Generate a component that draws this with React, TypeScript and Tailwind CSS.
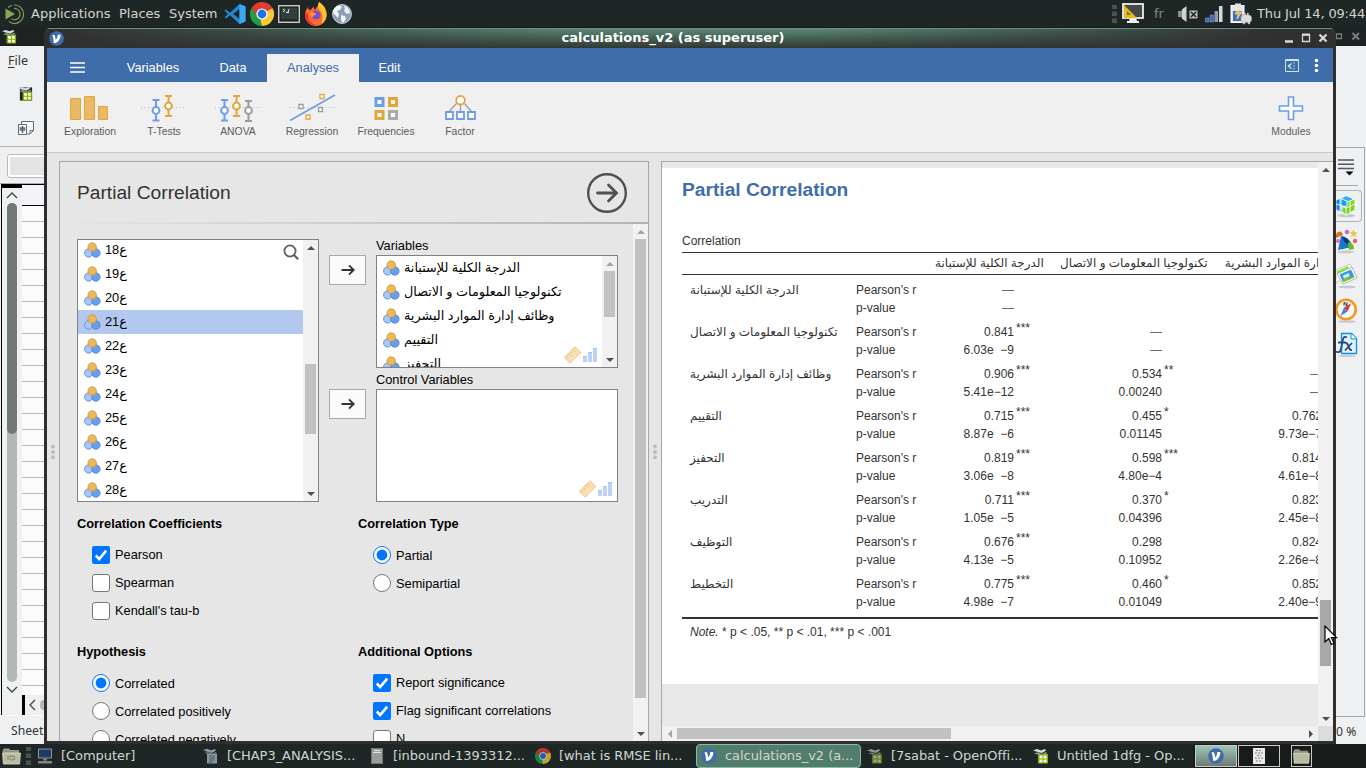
import React from "react";

const UI = "font-['Liberation_Sans','DejaVu_Sans',sans-serif]";
const DJ = "font-['DejaVu_Sans',sans-serif]";

/* ---------- small drawings ---------- */

const NominalIcon = () => (
  <svg width="17" height="17" viewBox="0 0 17 17" className="shrink-0">
    <circle cx="4.7" cy="11" r="4.2" fill="#a9c6f3" stroke="#5d92e6" strokeWidth="0.9" />
    <circle cx="11.9" cy="11" r="4.2" fill="#6b9de8" stroke="#4a86e0" strokeWidth="0.9" />
    <circle cx="8.2" cy="5" r="4.2" fill="#ebb95c" stroke="#cf9a35" strokeWidth="0.9" />
  </svg>
);

const JamoviIcon = ({ size = 16 }: { size?: number }) => (
  <svg width={size} height={size} viewBox="0 0 16 16" className="shrink-0">
    <circle cx="8" cy="8" r="7.8" fill="#3e6da9" />
    <path d="M3.400 4.200h2.400c.9 1.600 1.200 3.400 1.300 5.200C8.700 8 9.200 6 9.300 4h3.100c0 3.600-2 7.600-5.400 8.700H5C4.900 9.700 4.700 6.600 3.400 4.200Z" fill="#fff" />
  </svg>
);

const CalcIcon = ({ size = 16, dim = false }: { size?: number; dim?: boolean }) => (
  <svg width={size} height={size} viewBox="0 0 16 16" className={dim ? "shrink-0 opacity-60" : "shrink-0"}>
    <rect x="2" y="1.500" width="13" height="14" fill="#20282c" />
    <path d="M0 2.500 4 1l4 1.500L12 1l1 1.500L9 5 4 3.700Z" fill="#d3dde4" />
    <path d="M1 5.500 5 4.300 9 6 13 4l1 1.300L9 8 5 6.500Z" fill="#8ba0ae" />
    <rect x="5" y="6" width="10" height="9.500" fill="#8aa80a" />
    <path d="M6.500 7.500h3v3h-3zM10.600 7.500h3v3h-3zM6.500 11.500h3v3h-3zM10.600 11.500h3v3h-3z" fill="#f6fbdc" />
  </svg>
);

const WriterIcon = () => (
  <svg width="16" height="16" viewBox="0 0 16 16" className="shrink-0">
    <path d="M0 2 4 .8l4 1.400L12 1l1 1.500L9 5 4 3.700Z" fill="#8a979e" />
    <path d="M1 5 5 4l4 1.500L13 4l1 1.300L9 7.500 5 6Z" fill="#6c7a84" />
    <rect x="4" y="6" width="10" height="9.500" fill="#8b989f" />
    <path d="M6 8h6M6 10h6M6 12h6M6 14h4" stroke="#4a5963" />
  </svg>
);

const ChromeIcon = ({ size, dim = false }: { size: number; dim?: boolean }) => (
  <svg width={size} height={size} viewBox="0 0 24 24" className={dim ? "shrink-0 opacity-75" : "shrink-0"}>
    <path d="M12 12 1.600 6A12 12 0 0 1 22.400 6Z" fill="#e33b2e" />
    <path d="M12 12 22.400 6A12 12 0 0 1 12 24Z" fill="#fcc934" />
    <path d="M12 12 12 24A12 12 0 0 1 1.600 6Z" fill="#1e9e4a" />
    <path d="M12 6.500h10.600l-.2-.5H12zM7.200 14.700 1.600 6l5 2.500z" fill="#e33b2e" />
    <path d="M16.800 14.700 12 24l-1.500-6z" fill="#fcc934" />
    <circle cx="12" cy="12" r="5.600" fill="#fff" />
    <circle cx="12" cy="12" r="4.400" fill="#1a73e8" />
  </svg>
);

const FolderIcon = ({ w = 19, plain = false }: { w?: number; plain?: boolean }) => (
  <svg width={w} height="17" viewBox="0 0 19 17" className="shrink-0">
    <path d="M1 2.500 2 1h5l1 1.500h8.500v3H1z" fill="#8f9479" stroke="#d1d3bd" strokeWidth=".6" />
    <path d="M.6 5h17.800L17.600 16H1.300z" fill="#b9bba3" stroke="#dedfcd" strokeWidth=".8" />
    {!plain && <path d="M6 8v4M12.500 8v4M8 8h3v4H8z" stroke="#6d705c" fill="none" strokeWidth=".9" strokeDasharray="1.500 1" />}
  </svg>
);

const Arrow = () => (
  <svg width="14" height="14" viewBox="0 0 14 14" fill="none" stroke="#333" strokeWidth="1.900">
    <path d="M.5 7h12.200M8 2.300 12.700 7 8 11.700" />
  </svg>
);

type Dir = "up" | "down" | "left" | "right";
const triPath: Record<Dir, string> = {
  up: "M0 6 4 2l4 4z",
  down: "M0 2l4 4 4-4z",
  left: "M6 0 2 4l4 4z",
  right: "M2 0l4 4-4 4z",
};
const Tri = ({ dir, color = "#505050" }: { dir: Dir; color?: string }) => (
  <span className="flex h-[15px] w-[15px] shrink-0 items-center justify-center">
    <svg width="8" height="8" viewBox="0 0 8 8">
      <path d={triPath[dir]} fill={color} />
    </svg>
  </span>
);

const Dots = () => (
  <svg width="6" height="18" viewBox="0 0 6 18" fill="#bdbdbd">
    <circle cx="3" cy="3.500" r="2" />
    <circle cx="3" cy="9" r="2" />
    <circle cx="3" cy="14.300" r="2" />
  </svg>
);

const Grip = () => (
  <svg width="5" height="18" viewBox="0 0 5 18" fill="#4b5150">
    <path d="M0 0h5v4H0zM0 6.500h5v4.500H0zM0 13.500h5v4.500H0z" />
  </svg>
);

const Levels = () => (
  <svg width="36" height="20" viewBox="0 0 36 20">
    <g transform="translate(9.500 10) rotate(-45)">
      <rect x="-7.500" y="-4" width="15" height="8" fill="#f8deb2" stroke="#efcf98" />
      <path d="M-5-4v3M-2-4v4M1-4v3M4-4v4" stroke="#e6c48a" strokeWidth=".8" />
    </g>
    <path d="M20 11h4v6h-4zM25 7h4v10h-4zM30 3h4v14h-4z" fill="#bcd3f6" />
    <path d="M20 11.500h4M25 7.500h4M30 3.500h4" stroke="#a3c2f2" />
  </svg>
);

/* ---------- ribbon ---------- */

const Beam = ({ x, y1, y2, c, color }: { x: number; y1: number; y2: number; c: number; color: string }) => (
  <g stroke={color} fill="none" strokeWidth="2">
    <path d={`M${x} ${y1}V${y2}M${x - 3.5} ${y1}h7M${x - 3.5} ${y2}h7`} />
    <circle cx={x} cy={c} r="3.400" fill="#fff" />
  </g>
);

const ribbonIcons: Record<string, React.ReactNode> = {
  Exploration: (
    <g fill="#e9b964" stroke="#e3a63c">
      <path d="M4.500 6.500h10v21h-10zM18.500 4.500h10v23h-10zM32.500 14.500h9v13h-9z" />
    </g>
  ),
  "T-Tests": (
    <>
      <path d="M1 15.500h46" stroke="#b0bdd0" strokeDasharray="1 2.500" />
      <Beam x={16} y1={8} y2={28.5} c={18.500} color="#6b9de8" />
      <Beam x={28.500} y1={4} y2={24} c={14} color="#e3a63c" />
    </>
  ),
  ANOVA: (
    <>
      <path d="M1 15.500h46" stroke="#b0bdd0" strokeDasharray="1 2.500" />
      <Beam x={10.500} y1={8} y2={28.5} c={18.500} color="#6b9de8" />
      <Beam x={22.500} y1={4} y2={24} c={14} color="#e3a63c" />
      <Beam x={34.500} y1={9} y2={29} c={18.500} color="#9b9b9b" />
    </>
  ),
  Regression: (
    <>
      <path d="M2 15.500h46" stroke="#b0bdd0" strokeDasharray="1 2.500" />
      <path d="M2 28.500 47 3" stroke="#6b9de8" strokeWidth="1.700" />
      <path d="M32 2.500h4v4h-4zM18 23h4v4h-4z" fill="#fff" stroke="#e3a63c" strokeWidth="1.300" />
      <path d="M11 12.500h4v4h-4zM30.500 15.500h4v4h-4z" fill="#fff" stroke="#9b9b9b" strokeWidth="1.300" />
    </>
  ),
  Frequencies: (
    <g fill="#fff" strokeWidth="3">
      <path d="M14 6.500h7v7h-7z" stroke="#6b9de8" />
      <path d="M27.500 6.500h7v7h-7z" stroke="#e3a63c" />
      <path d="M14 19.500h7v7h-7z" stroke="#e3a63c" />
      <path d="M27.500 19.500h7v7h-7z" stroke="#ababab" />
    </g>
  ),
  Factor: (
    <>
      <path d="M20.500 11.500 12.500 20M24.500 13v7M28.500 11.500 36 20" stroke="#999" strokeWidth="1.200" />
      <circle cx="24.500" cy="8.200" r="4.300" fill="#fff" stroke="#e3a63c" strokeWidth="1.800" />
      <path d="M10 20h7v7h-7zM21 20h7v7h-7zM32 20h7v7h-7z" fill="#fff" stroke="#6b9de8" strokeWidth="1.800" />
    </>
  ),
  Modules: (
    <path d="M21.500 5h5v9h9v5h-9v8.500h-5V19h-9v-5h9z" fill="#fff" stroke="#6b9de8" strokeWidth="1.600" />
  ),
};

const RibbonButton = ({ name }: { name: string }) => (
  <div className="flex w-[74px] flex-col items-center pt-[10px]">
    <svg width="48" height="32" viewBox="0 0 48 32" fill="none">
      {ribbonIcons[name]}
    </svg>
    <span className="text-[10.4px] leading-[16px] text-[#5c5c5c]">{name}</span>
  </div>
);

/* ---------- options panel ---------- */

const leftVars = ["ع18", "ع19", "ع20", "ع21", "ع22", "ع23", "ع24", "ع25", "ع26", "ع27", "ع28"];
const chosenVars = [
  "الدرجة الكلية للإستبانة",
  "تكنولوجيا المعلومات و الاتصال",
  "وظائف إدارة الموارد البشرية",
  "التقييم",
  "التحفيز",
];

const Check = ({ label, on = false }: { label: string; on?: boolean }) => (
  <div className="flex h-[28px] shrink-0 items-start gap-[5px]">
    {on ? (
      <svg width="18" height="18" viewBox="0 0 18 18" className="shrink-0">
        <rect width="18" height="18" rx="2" fill="#0075ff" />
        <path d="M3.800 9.500 7.200 13 14.200 4.600" fill="none" stroke="#fff" strokeWidth="2.600" />
      </svg>
    ) : (
      <span className="h-[18px] w-[18px] shrink-0 rounded-[3px] border border-[#767676] bg-white" />
    )}
    <span className="leading-[18px] whitespace-nowrap">{label}</span>
  </div>
);

const Radio = ({ label, on = false }: { label: string; on?: boolean }) => (
  <div className="flex h-[28px] shrink-0 items-start gap-[5px]">
    <svg width="18" height="18" viewBox="0 0 18 18" className="shrink-0">
      <circle cx="9" cy="9" r="8.500" fill="#fff" stroke={on ? "#0075ff" : "#767676"} />
      {on && <circle cx="9" cy="9" r="5.400" fill="#0075ff" />}
    </svg>
    <span className="leading-[20px] whitespace-nowrap">{label}</span>
  </div>
);

const MoveButton = () => (
  <div className="flex h-[30px] w-[37px] items-center justify-center border border-[#a9a9a9] bg-[#fafafa]">
    <Arrow />
  </div>
);

const OptionsPanel = () => (
  <section className="flex w-[590px] shrink-0 flex-col border border-b-0 border-[#a6a6a6]">
    <div className="flex h-[60px] shrink-0 items-center justify-between pt-[2px] pr-[20px] pl-[17px]">
      <h1 className="text-[19.2px] text-[#333]">Partial Correlation</h1>
      <svg width="42" height="42" viewBox="0 0 42 42" fill="none" stroke="#515151">
        <circle cx="21" cy="21" r="18.800" strokeWidth="2.400" />
        <path d="M11.500 21h18.500M22.500 13 30.500 21 22.500 29" strokeWidth="2.800" strokeLinecap="round" />
      </svg>
    </div>
    <div className="h-[2px] shrink-0 bg-linear-to-r from-[#e6e6e6] to-[#b4b4b4]" />
    <div className="flex min-h-0 flex-1">
      <div className="flex min-w-0 flex-1 flex-col overflow-hidden pt-[15px] pl-[17px] text-[12.8px] text-black">
        <div className="flex shrink-0 gap-[10px]">
          <div className="flex h-[263px] w-[242px] border border-[#828282] bg-white">
            <div className="relative flex-1 overflow-hidden">
              <ul className="-mt-[2px]">
                {leftVars.map((v) => (
                  <li
                    key={v}
                    className={
                      v === "ع21"
                        ? "flex h-[24px] items-center gap-[4px] bg-[#b3c8ee] pl-[6px]"
                        : "flex h-[24px] items-center gap-[4px] pl-[6px]"
                    }
                  >
                    <NominalIcon />
                    <span>{v}</span>
                  </li>
                ))}
              </ul>
              <svg className="absolute top-[4px] right-[4px]" width="16" height="16" viewBox="0 0 16 16" fill="none" stroke="#5f5f5f" strokeWidth="1.800">
                <circle cx="7" cy="7" r="5.600" />
                <path d="m11 11 4.200 4.200" strokeWidth="2.200" />
              </svg>
            </div>
            <div className="flex w-[15px] flex-col items-center bg-[#f1f1f1]">
              <Tri dir="up" />
              <div className="mt-[109px] h-[70px] w-[11px] bg-[#c1c1c1]" />
              <div className="flex-1" />
              <Tri dir="down" />
            </div>
          </div>
          <div className="flex flex-col gap-[104px] pt-[16px]">
            <MoveButton />
            <MoveButton />
          </div>
          <div className="flex w-[242px] flex-col">
            <div className="h-[16px] leading-[13px]">Variables</div>
            <div className="flex h-[113px] border border-[#828282] bg-white">
              <div className="relative flex-1 overflow-hidden">
                <ul>
                  {chosenVars.map((v) => (
                    <li key={v} className="flex h-[24px] items-center gap-[4px] pl-[6px] whitespace-nowrap">
                      <NominalIcon />
                      <span>{v}</span>
                    </li>
                  ))}
                </ul>
                <div className="absolute right-[3px] bottom-[2px]">
                  <Levels />
                </div>
              </div>
              <div className="flex w-[15px] flex-col items-center bg-[#f1f1f1]">
                <Tri dir="up" color="#a3a3a3" />
                <div className="h-[46px] w-[11px] bg-[#c1c1c1]" />
                <div className="flex-1" />
                <Tri dir="down" />
              </div>
            </div>
            <div className="h-[21px] leading-[23px]">Control Variables</div>
            <div className="flex h-[113px] items-end justify-end border border-[#828282] bg-white pr-[3px] pb-[2px]">
              <Levels />
            </div>
          </div>
        </div>
        <div className="flex shrink-0 pt-[14px]">
          <div className="w-[281px]">
            <h2 className="mb-[14px] leading-[16px] font-bold">Correlation Coefficients</h2>
            <div className="flex h-[98px] flex-col pl-[15px]">
              <Check label="Pearson" on />
              <Check label="Spearman" />
              <Check label="Kendall's tau-b" />
            </div>
            <h2 className="mb-[14px] leading-[16px] font-bold">Hypothesis</h2>
            <div className="flex flex-col pl-[15px]">
              <Radio label="Correlated" on />
              <Radio label="Correlated positively" />
              <Radio label="Correlated negatively" />
            </div>
          </div>
          <div>
            <h2 className="mb-[14px] leading-[16px] font-bold">Correlation Type</h2>
            <div className="flex h-[98px] flex-col pl-[15px]">
              <Radio label="Partial" on />
              <Radio label="Semipartial" />
            </div>
            <h2 className="mb-[14px] leading-[16px] font-bold">Additional Options</h2>
            <div className="flex flex-col pl-[15px]">
              <Check label="Report significance" on />
              <Check label="Flag significant correlations" on />
              <Check label="N" />
            </div>
          </div>
        </div>
      </div>
      <div className="flex w-[15px] shrink-0 flex-col items-center bg-[#f1f1f1]">
        <Tri dir="up" color="#a3a3a3" />
        <div className="h-[459px] w-[11px] bg-[#c1c1c1]" />
        <div className="flex-1" />
        <Tri dir="down" />
      </div>
    </div>
  </section>
);

/* ---------- results panel ---------- */

type Cell = [value: string, stars?: string];
type Row = { name: string; r: Cell[]; p: string[] };

const rows: Row[] = [
  { name: "الدرجة الكلية للإستبانة", r: [["—"], [""], [""]], p: ["—", "", ""] },
  { name: "تكنولوجيا المعلومات و الاتصال", r: [["0.841", "***"], ["—"], [""]], p: ["6.03e  −9", "—", ""] },
  { name: "وظائف إدارة الموارد البشرية", r: [["0.906", "***"], ["0.534", "**"], ["—"]], p: ["5.41e−12", "0.00240", "—"] },
  { name: "التقييم", r: [["0.715", "***"], ["0.455", "*"], ["0.762"]], p: ["8.87e  −6", "0.01145", "9.73e−7"] },
  { name: "التحفيز", r: [["0.819", "***"], ["0.598", "***"], ["0.814"]], p: ["3.06e  −8", "4.80e−4", "4.61e−8"] },
  { name: "التدريب", r: [["0.711", "***"], ["0.370", "*"], ["0.823"]], p: ["1.05e  −5", "0.04396", "2.45e−8"] },
  { name: "التوظيف", r: [["0.676", "***"], ["0.298"], ["0.824"]], p: ["4.13e  −5", "0.10952", "2.26e−8"] },
  { name: "التخطيط", r: [["0.775", "***"], ["0.460", "*"], ["0.852"]], p: ["4.98e  −7", "0.01049", "2.40e−9"] },
];

const Num = ({ v, s }: { v: string; s?: string }) => (
  <div className="flex justify-end whitespace-pre">
    <span className={v === "—" ? "text-[#6a6a6a]" : ""}>{v}</span>
    <span className="-mt-[4px] w-[30px] pl-[2px]">{s}</span>
  </div>
);

const COLS = "grid grid-cols-[166px_188px_148px_160px]";

const ResultsPanel = () => (
  <section className="flex min-w-0 flex-1 flex-col border-t border-l border-[#a6a6a6] bg-[#e8e8e8]">
    <div className="flex h-[564px] shrink-0">
      <div className="flex min-w-0 flex-1 flex-col overflow-hidden pt-[6px]">
        <div className="h-[516px] shrink-0 bg-white pl-[20px] text-[12px] text-[#333]">
          <h1 className="h-[65px] pt-[8px] text-[19.2px] leading-[28px] font-bold text-[#3e6da9]">Partial Correlation</h1>
          <div className="h-[19px] leading-[16px]">Correlation</div>
          <div className="w-[700px]">
            <div className="flex h-[23px] border-y border-[#333] pl-[253px] leading-[21px] whitespace-nowrap">
              <span className="w-[125px]">الدرجة الكلية للإستبانة</span>
              <span className="w-[165px]">تكنولوجيا المعلومات و الاتصال</span>
              <span className="-ml-[27px] w-[168px] text-right">وظائف إدارة الموارد البشرية</span>
            </div>
            <div className="h-[344px] border-b-2 border-[#333] pt-[6px] pl-[8px]">
              {rows.map((row) => (
                <div key={row.name} className="mb-[6px] h-[36px] leading-[18px]">
                  <div className={COLS}>
                    <span className="h-[18px] whitespace-nowrap">{row.name}</span>
                    <div className="flex justify-between">
                      <span className="whitespace-nowrap">Pearson's r</span>
                      <Num v={row.r[0][0]} s={row.r[0][1]} />
                    </div>
                    <Num v={row.r[1][0]} s={row.r[1][1]} />
                    <Num v={row.r[2][0]} s={row.r[2][1]} />
                  </div>
                  <div className={COLS}>
                    <span />
                    <div className="flex justify-between">
                      <span className="whitespace-nowrap">p-value</span>
                      <Num v={row.p[0]} />
                    </div>
                    <Num v={row.p[1]} />
                    <Num v={row.p[2]} />
                  </div>
                </div>
              ))}
            </div>
            <div className="pt-[5px] pl-[8px] leading-[16px]">
              <i>Note.</i> * p &lt; .05, ** p &lt; .01, *** p &lt; .001
            </div>
          </div>
        </div>
      </div>
      <div className="flex w-[15px] shrink-0 flex-col items-center bg-[#f1f1f1]">
        <Tri dir="up" />
        <div className="mt-[423px] h-[66px] w-[11px] bg-[#a8a8a8]" />
        <div className="flex-1" />
        <Tri dir="down" />
      </div>
    </div>
    <div className="flex h-[15px] shrink-0">
      <div className="flex flex-1 items-center bg-[#f1f1f1]">
        <Tri dir="left" color="#a3a3a3" />
        <div className="h-[11px] w-[274px] bg-[#c1c1c1]" />
        <div className="flex-1" />
        <Tri dir="right" />
      </div>
      <div className="w-[15px] bg-[#dcdcdc]" />
    </div>
  </section>
);

/* ---------- main window ---------- */

const MainWindow = () => (
  <main className={`z-10 flex w-[1292px] shrink-0 flex-col overflow-hidden rounded-t-[6px] border-x-[3px] border-b-[3px] border-[#2f2f2f] bg-[#151b1a] pt-[1px] ${UI}`}>
    <header className="flex h-[20px] shrink-0 items-center border-t border-[#6f8f82] bg-[linear-gradient(to_right,#2f2f2f_0%,transparent_42%,transparent_60%,#2f2f2f_96%),linear-gradient(to_bottom,#5a8774_0%,#456355_45%,#323635_100%)] px-[2px]">
      <div className="w-[60px]">
        <JamoviIcon size={15} />
      </div>
      <div className={`-mt-[2px] flex-1 text-center text-[13px] leading-[18px] font-bold text-white ${DJ}`}>calculations_v2 (as superuser)</div>
      <div className="-mt-[1px] flex w-[94px] justify-end pr-[3px]">
        <svg width="46" height="12" viewBox="0 0 46 12" fill="none" stroke="#d8d8d8">
          <path d="M3 9.500h8" strokeWidth="2.400" />
          <path d="M20.500 3h7v6.500h-7z" strokeWidth="1.300" />
          <path d="M20 2.500h8" strokeWidth="2" />
          <path d="m37.500 2.500 7 7m0-7-7 7" strokeWidth="2.300" />
        </svg>
      </div>
    </header>
    <nav className="flex h-[34px] shrink-0 items-end bg-[#3e6da9] text-[12.8px] text-white">
      <div className="flex h-[28px] w-[60px] items-center justify-center">
        <svg width="15" height="11" viewBox="0 0 15 11" stroke="#fff" strokeWidth="1.700" className="-mt-[2px]">
          <path d="M0 1h15M0 5.500h15M0 10h15" />
        </svg>
      </div>
      <div className="flex h-[28px] w-[92px] items-center justify-center">Variables</div>
      <div className="flex h-[28px] w-[68px] items-center justify-center">Data</div>
      <div className="flex h-[28px] w-[92px] items-center justify-center bg-[#f0f0f0] text-[#3e6da9]">Analyses</div>
      <div className="flex h-[28px] w-[61px] items-center justify-center">Edit</div>
      <div className="flex-1" />
      <svg width="14" height="13" viewBox="0 0 14 13" fill="none" stroke="#d5e0ee" className="mb-[10px]">
        <path d="M.5 1h13v11.500H.5z" />
        <path d="M.5 1h13" strokeWidth="2" />
        <path d="M6.500 4.500 3.500 7l3 2.500" strokeWidth="1.500" />
        <path d="M9 3v9" strokeDasharray="1.500 1.500" />
      </svg>
      <svg width="5" height="15" viewBox="0 0 5 15" fill="#fff" className="mr-[14px] mb-[9px] ml-[15px]">
        <circle cx="2.500" cy="2.500" r="1.800" />
        <circle cx="2.500" cy="7.500" r="1.800" />
        <circle cx="2.500" cy="12.500" r="1.800" />
      </svg>
    </nav>
    <div className="flex h-[71px] shrink-0 border-b border-[#cbcbcb] bg-[#f0f0f0] pr-[5px] pl-[6px]">
      {["Exploration", "T-Tests", "ANOVA", "Regression", "Frequencies", "Factor"].map((n) => (
        <RibbonButton key={n} name={n} />
      ))}
      <div className="flex-1" />
      <RibbonButton name="Modules" />
    </div>
    <div className="flex min-h-0 flex-1 bg-[#e6e6e6] pt-[8px]">
      <div className="flex w-[12px] shrink-0 items-center justify-center pt-[2px]">
        <Dots />
      </div>
      <OptionsPanel />
      <div className="flex w-[12px] shrink-0 items-center justify-center pt-[2px]">
        <Dots />
      </div>
      <ResultsPanel />
    </div>
  </main>
);

/* ---------- spreadsheet window behind ---------- */

const BehindLeft = () => (
  <aside className="flex w-[44px] shrink-0 flex-col overflow-hidden bg-[#eff0f2] font-['Noto_Sans',sans-serif] text-[12.5px] text-[#333]">
    <div className="flex h-[19px] shrink-0 items-center bg-[#1c2322] pl-[2px]">
      <CalcIcon size={15} />
    </div>
    <div className="flex h-[101px] shrink-0 flex-col border-b border-[#b4b5b8] pl-[8px]">
      <span className="mt-[5px] leading-[20px]">
        <u className="underline-offset-2">F</u>ile
      </span>
      <div className="mt-[15px] ml-[10px]">
        <CalcIcon size={15} />
      </div>
      <svg width="17" height="16" viewBox="0 0 17 16" className="mt-[19px] ml-[10px]" fill="none" stroke="#5d6d78">
        <path d="M3.500 4V1.500h12v9l-3.500 3.500H9" fill="#f8f9fa" />
        <path d="M15.500 10.500H12V14" />
        <path d="M.5 4.500h8v10h-8z" fill="#fff" />
        <path d="M4.500 6v7M2.500 8h4v2h-4z" strokeWidth="1.500" />
      </svg>
    </div>
    <div className="h-[37px] shrink-0 border-b border-[#a9aaac] pt-[7px] pl-[7px]">
      <div className="h-[24px] w-[60px] rounded-[3px] border border-[#b9babc] bg-white p-[2px]">
        <div className="h-full bg-[#e4e4e4]" />
      </div>
    </div>
    <div className="ml-[1px] flex h-[531px] shrink-0 border-l border-black">
      <div className="flex w-[20px] shrink-0 flex-col items-center border-t-4 border-black bg-[#eff0f2]">
        <svg width="12" height="7" viewBox="0 0 12 7" fill="none" stroke="#444" strokeWidth="1.300" className="mt-[4px] mb-[4px]">
          <path d="m1 6 5-5 5 5" />
        </svg>
        <div className="flex h-[479px] w-[10px] flex-col rounded-full bg-[#b6b7b8]">
          <div className="h-[231px] rounded-full bg-[#747778]" />
        </div>
        <svg width="12" height="7" viewBox="0 0 12 7" fill="none" stroke="#444" strokeWidth="1.300" className="mt-[4px]">
          <path d="m1 1 5 5 5-5" />
        </svg>
      </div>
      <div className="flex flex-1 flex-col">
        <div className="h-[22px] shrink-0 border-y border-black bg-[#f3f4f7]" />
        <div className="h-[489px] shrink-0 bg-[repeating-linear-gradient(to_bottom,#fcfcfc_0px,#fcfcfc_15px,#b9b9b9_15px,#b9b9b9_16px)]" />
        <div className="flex h-[20px] items-center border-l-[3px] border-black bg-[#eff0f2] pl-[4px]">
          <svg width="7" height="12" viewBox="0 0 7 12" fill="none" stroke="#444" strokeWidth="1.300">
            <path d="M6 1 1 6l5 5" />
          </svg>
          <div className="ml-[4px] h-[10px] w-[4px] shrink-0 rounded-l-full bg-[#b6b7b8]" />
        </div>
      </div>
    </div>
    <div className="h-[28px] shrink-0 border-t border-[#fafafa] pl-[11px] text-[12.2px] leading-[30px]">Sheet</div>
  </aside>
);

const BehindRight = () => (
  <aside className="flex w-[30px] shrink-0 flex-col overflow-hidden bg-[#eff0f2] font-['Noto_Sans',sans-serif] text-[12.5px] text-[#333]">
    <div className="flex h-[19px] shrink-0 items-center bg-[#1c2322]">
      <svg width="30" height="12" viewBox="0 0 30 12" fill="none" stroke="#777d7c">
        <path d="M0.500 3h5v4.500h-5z" strokeWidth="1.300" />
        <path d="m16.500 2 6.500 6.500m0-6.500-6.500 6.500" strokeWidth="2.200" />
      </svg>
    </div>
    <div className="h-[101px] shrink-0" />
    <div className="flex h-[570px] w-[29px] shrink-0 flex-col border-t border-r border-b border-[#a6a7aa]">
      <svg width="24" height="38" viewBox="0 0 24 38">
        <path d="M2 12h16M2 16.200h16M2 20.500h16" stroke="#4d5863" strokeWidth="1.600" />
        <path d="M9.500 23.500h8L13.500 27.500z" fill="#000" />
        <path d="M0 38h22" stroke="#aaa" strokeWidth="2" />
      </svg>
      <div className="mt-[4px] flex h-[32px] w-[26px] items-center rounded-r-[4px] border border-l-0 border-[#b1b2b5]">
        <svg width="21" height="24" viewBox="0 0 21 24" stroke="#fff" strokeWidth=".9">
          <ellipse cx="10" cy="21.500" rx="9" ry="1.800" fill="#c9cacc" stroke="none" />
          <path d="M0 6 5 4v14l-5-2z" fill="#0b84e8" />
          <path d="M4 4 10 1.500 18 5v12l-8 4-6-4z" fill="#1d9bf7" />
          <path d="M10 1.500 18 5l-5 3-8-3.500z" fill="#25b8ee" />
          <path d="M11 8l8-3v11l-9 5-4-3v-5l5-1z" fill="#7ed321" />
          <path d="M5 12l5 2 9-4M10 14v7M14 7v11M5 4v12M0 10l10 3" fill="none" />
        </svg>
      </div>
      <svg width="22" height="25" viewBox="0 0 22 25" className="mt-[7px] shrink-0">
        <ellipse cx="10" cy="23" rx="9" ry="1.500" fill="#c9cacc" />
        <path d="M0 5c3-4 6-3 7 1L0 9z" fill="#e0701c" />
        <path d="M2 21 5 7c6 0 11 6 11 11z" fill="#1878c9" />
        <path d="M6 8c4 0 8 4 9 8l-6-2z" fill="#0d3a63" />
        <path d="M12 13c4 0 6 3 6 7l-5 1z" fill="#6cc025" />
        <circle cx="11" cy="3" r="2.300" fill="#c26be8" />
        <path d="m17.500 0 1.200 3 3 .3-2.300 2 .8 3-2.700-1.700L15 8.300l.7-3-2.300-2 3-.3z" fill="#f6c445" />
        <circle cx="19" cy="12" r="2.200" fill="#f05a70" />
        <circle cx="2" cy="12" r="2" fill="#ef62c5" />
      </svg>
      <svg width="22" height="26" viewBox="0 0 22 26" className="mt-[9px] shrink-0">
        <ellipse cx="11" cy="24" rx="9" ry="1.500" fill="#c9cacc" />
        <path d="M0 7 14 1l3 5L0 20z" fill="#fff" stroke="#b8b8b8" strokeWidth=".7" />
        <path d="M1 8 12 3l1 2L1 12z" fill="#7dea28" />
        <path d="m1 11 15-7 5 11-14 6z" fill="#fff" stroke="#a8a8a8" strokeWidth=".8" />
        <path d="m3.500 11.500 11.500-5 3.500 7.500-11.500 5z" fill="#2e9be0" />
        <path d="m6.500 13 6-3 1.500 3-5.500 2.800z" fill="#d8effc" />
        <path d="m6 17 5-3 2 1 4-2 1.500 1.500-11.500 5z" fill="#7cc62c" />
      </svg>
      <svg width="22" height="25" viewBox="0 0 22 25" className="mt-[9px] shrink-0">
        <ellipse cx="11" cy="23.500" rx="9" ry="1.300" fill="#c9cacc" />
        <circle cx="10" cy="11.500" r="9.700" fill="#f7f7f7" stroke="#f29a1f" strokeWidth="2.600" />
        <path d="m15 5.500-7 4 3.500 4z" fill="#e3332c" />
        <path d="m4.500 18 3.500-8.500 3.500 4z" fill="#3d85dd" />
        <text x="7" y="7.500" fontSize="6" fontWeight="700" fill="#333">N</text>
      </svg>
      <svg width="22" height="25" viewBox="0 0 22 25" className="mt-[9px] shrink-0">
        <ellipse cx="11" cy="24" rx="9" ry="1.200" fill="#c9cacc" />
        <path d="M5.500 1.500h10l5 5v15h-15z" fill="#e3f1fb" stroke="#0c8fe0" strokeWidth="1.300" />
        <path d="M15 1.500V7h5.500" fill="#fff" stroke="#0c8fe0" />
        <path d="M11 5.500C6 2.500 7 10 5 17c-.8 3.500-2.500 3.500-5 2.500M2 10.500h8M9.500 11c4-.5 2 8 6.500 7M16 11l-7 7.500" fill="none" stroke="#234a85" strokeWidth="1.800" />
      </svg>
    </div>
    <div className="h-[27px] shrink-0 text-[12.2px] leading-[29px] whitespace-nowrap">0 %</div>
  </aside>
);

/* ---------- desktop panels ---------- */

const TopPanel = () => (
  <div className={`flex h-[27px] shrink-0 items-center bg-[#1f2726] pl-[5px] text-[13px] text-[#d3d5d0] ${DJ}`}>
    <svg width="20" height="20" viewBox="0 0 20 20" className="mr-[6px] shrink-0" fill="none" stroke="#7d9c55" strokeWidth="1.200">
      <path d="M.5 4.500 10 10 .5 15.500z" fill="#87a556" stroke="none" />
      <path d="M9 1a9 9 0 0 1 9.500 9A9 9 0 0 1 4 17.500" />
      <path d="M9 4.500a5.500 5.500 0 0 1 6 5.500 5.500 5.500 0 0 1-8.500 4.800M3 3.500A9 9 0 0 1 7 1.300" />
    </svg>
    <span className="w-[88px]">Applications</span>
    <span className="w-[50px]">Places</span>
    <span className="w-[55px]">System</span>
    <svg width="22" height="22" viewBox="0 0 22 22" className="mr-[4px] shrink-0">
      <path d="M15.500 1 6 9.700 2 6.500.500 7.500 4 11 .500 14.500 2 15.500l4-3.200L15.500 21l6-2.500v-15z" fill="#1f8ad2" />
      <path d="M15.500 6v10L9 11z" fill="#1f2726" />
      <path d="M15.500 1v20l6-2.500v-15z" fill="#3aa8f2" />
    </svg>
    <ChromeIcon size={24} />
    <svg width="22" height="18" viewBox="0 0 22 18" className="ml-[4px] shrink-0">
      <rect x=".7" y=".7" width="20.600" height="16.600" fill="#202724" stroke="#c9cac6" strokeWidth="1.400" />
      <path d="M3 3h16v11H3z" fill="#30403a" />
      <path d="m5 4 2 1.500L5 7M8 7.500h3M11 4l-1 3" stroke="#e5e5e5" fill="none" />
    </svg>
    <svg width="24" height="24" viewBox="0 0 24 24" className="ml-[4px] shrink-0">
      <path d="M4 5c0 2 1 3 3 3 1-3 3-3 3-3s-.5 2 1 3c1-3 4-4 4-8 6 4 8 9 7.500 14C22 20 17 24 12 24S1 20 1 13c0-3 1.500-6 3-8z" fill="#ff6b2b" />
      <path d="M15 0c6 4 8 9 7.500 14-.5 3-2 6-5 8 2-7 1-11-2-14-2-2-2-5-.5-8z" fill="#ffc52e" />
      <path d="M1 12c0 7 6 12 12 11-6-1-10-5-9-12z" fill="#f0283c" />
      <circle cx="12" cy="13" r="4.500" fill="#7b4bd6" />
      <path d="M6 11c2-1 4-1 6 1-1 2-3 1-3 3-2 0-3-2-3-4z" fill="#ff9633" />
    </svg>
    <svg width="20" height="20" viewBox="0 0 20 20" className="ml-[4px] shrink-0">
      <circle cx="10" cy="10" r="9.400" fill="#8d9fb8" stroke="#d0d8e2" />
      <path d="M4 3c3-2 5-1 6 0L8 6 5 7l2 3-1 4-3-3-2-2c0-3 1-4 3-6zM12 2c3 0 6 4 6 7l-3 1-3-3 1-2zM9 11l4 1 1 3-3 4-2-3z" fill="#f0f3f6" />
    </svg>
    <div className="flex-1" />
    <Grip />
    <svg width="22" height="21" viewBox="0 0 22 21" className="ml-[5px] shrink-0">
      <rect x="1" y="1" width="20" height="14" fill="#44494a" stroke="#f0f0ee" strokeWidth="1.800" />
      <path d="M2 2v13h13z" fill="#e2be1d" />
      <path d="M5 8v4h4z" fill="#7c6a14" />
      <path d="M8 15h6l1 3h2v2H5v-2h2z" fill="#f0f0ee" />
    </svg>
    <span className="ml-[10px] w-[23px] text-[#858a88]">fr</span>
    <svg width="22" height="18" viewBox="0 0 22 18" className="shrink-0">
      <path d="M1 6h3l3-3v12l-3-3H1z" fill="#8a8c8a" />
      <path d="M5 4.500 9.500 1v16L5 13.500z" fill="#d0d1cf" />
      <rect x="12.500" y="5.500" width="8" height="8" fill="#b9bbb9" />
      <path d="m14 7 5 5m0-5-5 5" stroke="#1f2726" strokeWidth="1.500" />
    </svg>
    <svg width="18" height="18" viewBox="0 0 18 18" className="ml-[6px] shrink-0">
      <path d="M.5 13h3.500v4H.5zM5 10h3.500v7H5z" fill="#3d6cb0" stroke="#86a6d4" strokeWidth=".5" />
      <path d="M9.500 6H13v11H9.500z" fill="#8d9dac" />
      <path d="M14 1h3.500v16H14z" fill="#d6d7d6" />
    </svg>
    <svg width="22" height="22" viewBox="0 0 22 22" className="ml-[7px] shrink-0">
      <rect x="1" y="2.500" width="13" height="17" fill="#e4e6e4" stroke="#fff" />
      <rect x="5" y="0.500" width="6" height="3" fill="#e4e6e4" />
      <rect x="3" y="8" width="9" height="10" fill="#3f6fb5" />
      <path d="M8 5 5 11h3l-1 5 5-7H8.500z" fill="#f5b52e" stroke="#fff" strokeWidth=".5" />
      <path d="M11 15c0-2 1-3 3-3v-2h1.500v2H17v-2h1.500v2c2 0 3 1 3 3v3l-1.500 1v2h-2v-1.500h-3V21h-2v-2L11 18z" fill="#dcdddb" stroke="#9a9b99" strokeWidth=".5" />
    </svg>
    <span className="ml-[5px] w-[109px] tracking-[-0.15px] whitespace-nowrap">Thu Jul 14, 09:44</span>
  </div>
);

const tasks: { label: string; icon: React.ReactNode; active?: boolean }[] = [
  {
    label: "[Computer]",
    icon: (
      <svg width="16" height="16" viewBox="0 0 16 16">
        <rect x="1.500" y="1" width="13" height="9" fill="#1e3a6b" stroke="#8e9490" />
        <path d="M6 10.500h4v2H6zM1 13h14v2.500H1z" fill="#7d8380" />
      </svg>
    ),
  },
  { label: "[CHAP3_ANALYSIS...", icon: <WriterIcon /> },
  {
    label: "[inbound-1393312...",
    icon: (
      <svg width="16" height="16" viewBox="0 0 16 16">
        <rect x="2.500" y=".5" width="11" height="15" fill="#9a9c9a" stroke="#757775" />
        <path d="M4 4.500h8M5 2.500h6" stroke="#e4e4e4" strokeWidth="1.200" />
      </svg>
    ),
  },
  { label: "[what is RMSE lin...", icon: <ChromeIcon size={16} dim /> },
  { label: "calculations_v2 (a...", icon: <JamoviIcon size={16} />, active: true },
  { label: "[7sabat - OpenOffi...", icon: <CalcIcon dim /> },
  { label: "Untitled 1dfg - Op...", icon: <CalcIcon /> },
];

const BottomPanel = () => (
  <div className={`flex h-[24px] shrink-0 items-center bg-[#1f2726] text-[13px] text-[#d3d5d0] ${DJ}`}>
    <div className="flex w-[31px] items-center gap-[5px] pl-[2px]">
      <FolderIcon />
      <Grip />
    </div>
    {tasks.map((t) => (
      <div
        key={t.label}
        className={
          t.active
            ? "ml-[1px] flex h-full w-[165px] items-center rounded-[4px] border border-[#86bda6] bg-[#527d6d] pl-[4px] tracking-[-0.05px] whitespace-nowrap"
            : "flex h-full w-[166px] items-center pl-[6px] tracking-[-0.05px] whitespace-nowrap"
        }
      >
        <span className="mr-[8px] shrink-0">{t.icon}</span>
        <span className="leading-[20px]">{t.label}</span>
      </div>
    ))}
    <div className="flex h-full flex-1 items-center bg-[#171c1b] pl-[2px]">
      <div className="flex h-[22px] w-[42px] items-center justify-center border border-[#c8cbca] bg-linear-to-b from-[#9cc7b8] to-[#6f7a76]">
        <JamoviIcon />
      </div>
      <div className="ml-[1px] flex h-[22px] w-[42px] items-center justify-center border border-[#c8cbca]">
        <svg width="12" height="16" viewBox="0 0 12 16">
          <rect width="12" height="16" fill="#e9e9e7" />
          <path d="M3 2.500h6M2 5h8M4 7.500h4M2 10h8M3 13h6" stroke="#7f7f7f" strokeDasharray="2 1" />
        </svg>
      </div>
      <div className="ml-[11px] flex h-[22px] w-[21px] items-center justify-center border border-[#c8cbca]">
        <FolderIcon w={17} plain />
      </div>
    </div>
  </div>
);

export default function App() {
  return (
    <div className="relative flex h-[768px] w-[1366px] flex-col overflow-hidden bg-[#1f2726]">
      <TopPanel />
      <div className="flex h-[717px] shrink-0 bg-[#1c2322]">
        <BehindLeft />
        <MainWindow />
        <BehindRight />
      </div>
      <BottomPanel />
      <svg className="absolute top-[625px] left-[1324px] z-20" width="14" height="21" viewBox="0 0 14 21">
        <path d="M1 1v16l3.800-3.500 2.600 6 2.600-1.200-2.600-5.600H12.500z" fill="#fff" stroke="#000" strokeWidth="1.200" />
      </svg>
    </div>
  );
}
